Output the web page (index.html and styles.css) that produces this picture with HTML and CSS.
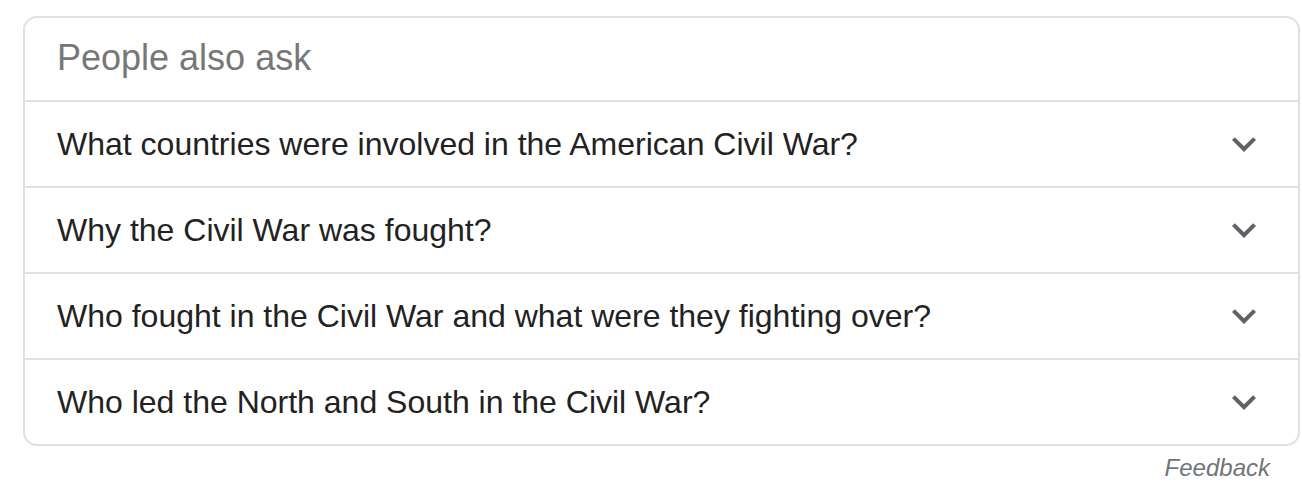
FILE: index.html
```html
<!DOCTYPE html>
<html>
<head>
<meta charset="utf-8">
<link rel="stylesheet" href="styles.css">
</head>
<body>
<div class="wrap">
  <div class="card">
    <div class="head">People also ask</div>
    <div class="row">
      <span class="q">What countries were involved in the American Civil War?</span>
      <svg class="chev" viewBox="0 0 24 24"><path d="M16.59 8.59L12 13.17 7.41 8.59 6 10l6 6 6-6z"/></svg>
    </div>
    <div class="row">
      <span class="q">Why the Civil War was fought?</span>
      <svg class="chev" viewBox="0 0 24 24"><path d="M16.59 8.59L12 13.17 7.41 8.59 6 10l6 6 6-6z"/></svg>
    </div>
    <div class="row">
      <span class="q">Who fought in the Civil War and what were they fighting over?</span>
      <svg class="chev" viewBox="0 0 24 24"><path d="M16.59 8.59L12 13.17 7.41 8.59 6 10l6 6 6-6z"/></svg>
    </div>
    <div class="row">
      <span class="q">Who led the North and South in the Civil War?</span>
      <svg class="chev" viewBox="0 0 24 24"><path d="M16.59 8.59L12 13.17 7.41 8.59 6 10l6 6 6-6z"/></svg>
    </div>
  </div>
  <div class="foot"><span class="feedback">Feedback</span></div>
</div>
</body>
</html>
```

FILE: styles.css
```css
html, body {
  margin: 0;
  padding: 0;
  background: #fff;
}
body {
  font-family: "Liberation Sans", Arial, sans-serif;
}
.wrap {
  padding: 16px 0 0 23px;
  width: 1277px;
}
.card {
  border: 2px solid #dfe1e5;
  border-radius: 14px;
  overflow: hidden;
}
.head {
  height: 82px;
  padding-left: 32px;
  font-size: 36px;
  line-height: 80px;
  color: #777777;
}
.row {
  display: flex;
  align-items: center;
  justify-content: space-between;
  height: 84px;
  border-top: 2px solid #dfe1e5;
  padding: 0 30px 0 32px;
}
.q {
  font-size: 32px;
  color: #222222;
  line-height: 82px;
}
.chev {
  width: 48px;
  height: 48px;
  fill: #5f6368;
  flex: none;
}
.foot {
  display: flex;
  justify-content: flex-end;
  padding: 7px 30px 0 0;
}
.feedback {
  font-size: 24px;
  font-style: italic;
  color: #70757a;
  line-height: 30px;
}
```
